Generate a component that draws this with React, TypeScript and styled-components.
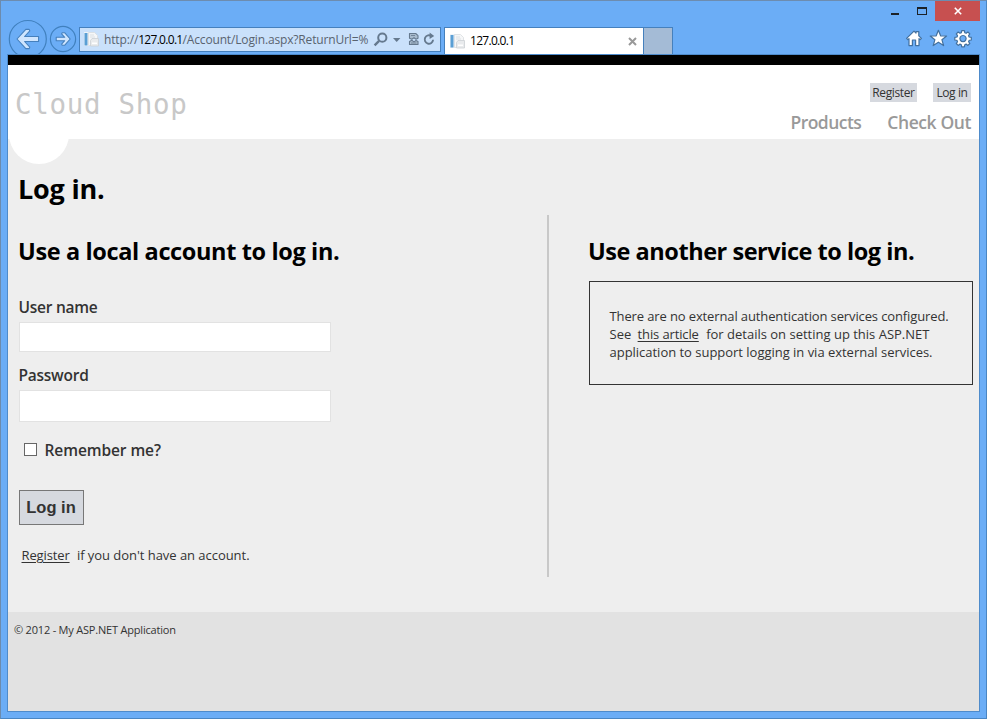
import React from 'react';
import styled, { createGlobalStyle } from 'styled-components';

const GlobalStyle = createGlobalStyle`
  * { box-sizing: border-box; }
  body { margin: 0; overflow: hidden; }
  h1, h2, p { margin: 0; }
  a { color: inherit; }
`;

const Window = styled.div`
  display: flex;
  flex-direction: column;
  width: 987px;
  height: 719px;
  padding: 0 6px 6px;
  background: #6badf6;
  border: 1px solid #4a86c3;
  border-top-color: #6d8caf;
  border-left-color: #6c8bad;
  font-family: 'Open Sans', 'Noto Sans', sans-serif;
  color: #333;
`;

const Chrome = styled.div`
  display: flex;
  flex: none;
  height: 53px;
`;

const Navigation = styled.div`
  display: flex;
  align-items: flex-start;
  height: 53px;
  overflow: hidden;
`;

const NavIcon = styled.svg`
  display: block;
  flex: none;
  width: 72px;
  height: 53px;
`;

const AddressBar = styled.div`
  display: flex;
  align-items: center;
  width: 362px;
  height: 25px;
  margin-top: 26px;
  padding-left: 3px;
  background: #cae1fb;
  border: 1px solid #4580bd;
`;

const Url = styled.div`
  flex: none;
  width: 267px;
  margin-left: 4px;
  overflow: hidden;
  white-space: nowrap;
  font-size: 12px;
  line-height: 20px;
  letter-spacing: -0.15px;
  color: #59636f;
`;

const Host = styled.span<{ $left?: number }>`
  font-family: 'Open Sans', sans-serif;
  letter-spacing: -0.7px;
  margin-left: ${({ $left = 0 }) => $left}px;
  font-size: 12px;
  line-height: 20px;
  color: #000;
`;

const Tab = styled.div`
  display: flex;
  align-items: center;
  width: 200px;
  height: 27px;
  margin: 26px 0 0 3px;
  padding: 0 6px 0 4px;
  background: #fff;
  border: 1px solid #4580bd;
  border-bottom: 0;
`;

const TabClose = styled.svg`
  width: 9px;
  height: 9px;
  margin-left: auto;
`;

const NewTab = styled.div`
  width: 29px;
  height: 27px;
  margin-top: 26px;
  background: #a4bbd6;
  border: 1px solid #4580bd;
  border-width: 1px 1px 0 0;
`;

const WindowTools = styled.div`
  display: flex;
  flex-direction: column;
  align-items: flex-end;
  margin-left: auto;
`;

const Controls = styled.div`
  display: flex;
  height: 20px;
`;

const ControlIcon = styled.svg`
  display: block;
  width: 50px;
  height: 20px;
`;

const CloseButton = styled.div`
  display: flex;
  align-items: center;
  justify-content: center;
  width: 45px;
  height: 20px;
  background: #c75050;
`;

const ToolIcons = styled.svg`
  display: block;
  width: 72px;
  height: 24px;
  margin: 5px 5px 0 0;
`;

const Page = styled.div`
  display: flex;
  flex-direction: column;
  width: 973px;
  height: 658px;
  background: #eee;
  border: 1px solid #4e8bcb;
`;

const Header = styled.header`
  position: relative;
  display: flex;
  justify-content: space-between;
  flex: none;
  height: 84px;
  background: #fff;
  border-top: 10px solid #000;

  &::after {
    content: '';
    position: absolute;
    left: 1px;
    top: 39px;
    width: 60px;
    height: 60px;
    border-radius: 50%;
    background: #fff;
  }
`;

const SiteTitle = styled.p`
  position: relative;
  z-index: 1;
  padding: 22px 0 0 7px;
  font: 27.5px/34px 'DejaVu Sans Mono', monospace;
  letter-spacing: 0.7px;
  color: #c8c8c8;
  white-space: pre;
`;

const HeaderLinks = styled.div`
  display: flex;
  flex-direction: column;
  align-items: flex-end;
  padding: 18px 8px 0 0;
`;

const AccountLinks = styled.nav`
  display: flex;
  gap: 16px;
`;

const AccountLink = styled.a<{ $width: number }>`
  width: ${({ $width }) => $width}px;
  height: 19px;
  background: #d6d9df;
  font-size: 12px;
  line-height: 20px;
  letter-spacing: -0.38px;
  text-align: center;
  white-space: nowrap;
`;

const MainMenu = styled.nav`
  display: flex;
  gap: 26px;
  margin-top: 7px;
`;

const MenuLink = styled.a<{ $spacing: number }>`
  font-size: 17.5px;
  font-weight: 600;
  line-height: 26px;
  letter-spacing: ${({ $spacing }) => $spacing}px;
  color: #999;
  white-space: nowrap;
`;

const Main = styled.main`
  flex: none;
  height: 473px;
  padding: 30px 0 0 11px;
`;

const PageTitle = styled.h1`
  height: 46px;
  margin-left: -1px;
  font-size: 27px;
  line-height: 39px;
  letter-spacing: -0.2px;
  color: #000;
`;

const Columns = styled.div`
  display: flex;
`;

const LocalLogin = styled.section`
  width: 530px;
  height: 362px;
  padding-top: 20px;
  border-right: 2px solid #c8c8c8;
`;

const SocialLogin = styled.section`
  width: 384px;
  margin-left: 40px;
  padding-top: 20px;
`;

const SectionTitle = styled.h2<{ $spacing: number }>`
  margin-left: -1px;
  font-size: 23.5px;
  line-height: 33px;
  height: 32px;
  letter-spacing: ${({ $spacing }) => $spacing}px;
  color: #000;
  white-space: nowrap;
`;

const Form = styled.form`
  display: flex;
  flex-direction: column;
  align-items: flex-start;
  margin-top: 29px;
`;

const Label = styled.label<{ $spacing?: number }>`
  height: 26px;
  margin-left: -0.5px;
  font-size: 15.5px;
  font-weight: 600;
  line-height: 22px;
  letter-spacing: ${({ $spacing = -0.25 }) => $spacing}px;
  white-space: nowrap;
`;

const TextInput = styled.input<{ $height: number; $gap: number }>`
  display: block;
  width: 312px;
  height: ${({ $height }) => $height}px;
  margin: 0 0 ${({ $gap }) => $gap}px;
  padding: 4px;
  background: #fff;
  border: 1px solid #e2e2e2;
  outline: 0;
`;

const RememberRow = styled.div`
  display: flex;
  gap: 8px;
  padding-left: 5px;
`;

const Checkbox = styled.input`
  appearance: none;
  width: 13px;
  height: 13px;
  margin: 4px 0 0;
  background: #fff;
  border: 1px solid #666;
`;

const SubmitButton = styled.button`
  width: 65px;
  height: 35px;
  margin-top: 25px;
  padding: 0 1px 0 0;
  background: #d6d9df;
  border: 1px solid #777;
  font: 700 16.5px/33px 'Liberation Sans', Arial, sans-serif;
  color: #333;
`;

const Hint = styled.p`
  margin: 21px 0 0 2.5px;
  font-size: 13px;
  line-height: 18px;
  letter-spacing: -0.04px;
  white-space: nowrap;
`;

const Link = styled.a<{ $left?: number; $right: number }>`
  margin: 0 ${({ $right }) => $right}px 0 ${({ $left = 0 }) => $left}px;
  letter-spacing: -0.13px;
  text-decoration: underline;
  text-decoration-thickness: 1px;
  text-underline-offset: 2px;
`;

const Notice = styled.div`
  height: 104px;
  margin-top: 14px;
  padding: 25px 0 0 19.5px;
  border: 1px solid #333;
  font-size: 13px;
  line-height: 18px;
`;

const NoticeLine = styled.p<{ $spacing: number }>`
  letter-spacing: ${({ $spacing }) => $spacing}px;
  white-space: nowrap;
`;

const Footer = styled.footer`
  flex: 1;
  padding: 9px 0 0 6px;
  background: #e2e2e2;
  font-size: 11px;
  line-height: 18px;
  letter-spacing: -0.2px;
`;

const FileIcon = styled.svg`
  display: block;
  flex: none;
  width: 17px;
  height: 17px;
`;

const PageIcon = () => (
  <FileIcon viewBox="0 0 17 17">
    <path d="M1 1h5v14H1z" fill="#eef4f9" />
    <path d="M1.5 2h3v12.5h-3z" fill="#5a9fd4" />
    <path d="M5.5 1.5h6l3 3v10h-9z" fill="#f6f7f8" stroke="#d9dde0" strokeWidth=".8" />
    <path d="M7 4h4M7 6h5" stroke="#d6dade" strokeWidth=".8" />
    <path d="M7.5 9.5l1.5-2h6.5v7.5h-8z" fill="#e9ebed" stroke="#ccd0d4" strokeWidth=".8" />
    <path d="M9 11.5h5v1.5H9z" fill="#fff" />
  </FileIcon>
);

const NavButtons = () => (
  <NavIcon viewBox="7 1 72 53">
    <g fill="none" stroke="#4080be" strokeWidth="1.2">
      <circle cx="27.8" cy="39" r="18.5" />
      <circle cx="63" cy="39" r="12.6" />
    </g>
    <g fill="#cfe5fe" stroke="#4580bd" strokeWidth="1.1" strokeLinejoin="round">
      <path d="M17 39l8.8-9.6h3.4l.6 1.5-5.2 5.6h14v5h-14l5.2 5.6-.6 1.5h-3.4z" />
      <path d="M70.2 39l-5.6-6.3h-2.4l-.6 1.2 3.1 3.4H56.2v3.4h8.5l-3.1 3.4.6 1.2h2.4z" />
    </g>
  </NavIcon>
);

const AddressIcons = () => (
  <svg width="66" height="19" viewBox="371 30 66 19">
    <g fill="none" stroke="#65798e">
      <circle cx="382.3" cy="37.7" r="4.1" strokeWidth="2" />
      <path d="M379.1 40.9l-4.5 4.4" strokeWidth="2.4" />
    </g>
    <path d="M393 38h7.4l-3.7 4z" fill="#65798e" />
    <g fill="#a9bccf" stroke="#65798e" strokeWidth="1.1" strokeLinejoin="round">
      <path d="M409.5 38.2v-4.7h6.2l2.3 2.2v2.5l-2 1-2-1.5-2.2 1.5z" />
      <path d="M409.5 44.5v-3l2.3-1.2 2.2 1.6 2-1.4 2 1v3z" />
    </g>
    <path d="M411 35.5h4M411 43h5.5" stroke="#65798e" strokeWidth=".8" />
    <path d="M431.5 36.2a4.2 4.2 0 1 0 1.6 3.6" fill="none" stroke="#65798e" strokeWidth="1.9" />
    <path d="M429.6 32.6l4.6 3.3-4.6 3.2z" fill="#65798e" />
  </svg>
);

const BrowserTools = () => (
  <ToolIcons viewBox="903 26 72 24">
    <g fill="#fff" stroke="#42709f" strokeWidth="1.2" strokeLinejoin="round">
      <path d="M906.6 38.4l7.4-7.3 2 2v-1.4h2.8v4.1l2.6 2.6-1.2 1.2-1.2-1v7h-3.4V40h-3.2v5.6H909v-7l-1.2 1z" />
      <path d="M938.4 30.3l2.2 5.5 6 .2-4.7 3.7 1.7 5.9-5.2-3.4-5.2 3.4 1.7-5.9-4.7-3.7 6-.2z" />
      <path
        fillRule="evenodd"
        d="M961.7 30.6h2.7l.4 2.2 1.3.5 1.8-1.3 1.9 1.9-1.2 1.8.5 1.3 2.2.4v2.6l-2.2.4-.5 1.3 1.2 1.8-1.9 1.9-1.8-1.3-1.3.6-.4 2.2h-2.7l-.4-2.2-1.3-.6-1.8 1.3-1.9-1.9 1.2-1.8-.5-1.3-2.2-.4v-2.6l2.2-.4.5-1.3-1.2-1.8 1.9-1.9 1.8 1.3 1.3-.5z M963 35.5a3.1 3.1 0 1 0 .01 0z"
      />
    </g>
  </ToolIcons>
);

export default function App() {
  return (
    <Window>
      <GlobalStyle />
      <Chrome>
        <Navigation>
          <NavButtons />
          <AddressBar>
            <PageIcon />
            <Url>
              http://<Host>127.0.0.1</Host>/Account/Login.aspx?ReturnUrl=%
            </Url>
            <AddressIcons />
          </AddressBar>
          <Tab>
            <PageIcon />
            <Host $left={4}>127.0.0.1</Host>
            <TabClose viewBox="0 0 9 9">
              <path d="M1 1l7 7M8 1L1 8" stroke="#999" strokeWidth="2" />
            </TabClose>
          </Tab>
          <NewTab />
        </Navigation>
        <WindowTools>
          <Controls>
            <ControlIcon viewBox="885 1 50 20">
              <path d="M891 13h8v2h-8z" fill="#1c2228" />
              <path d="M917 7h10v8h-10zM918 9v5h8V9z" fill="#1c2228" fillRule="evenodd" />
            </ControlIcon>
            <CloseButton>
              <svg width="8" height="8" viewBox="0 0 8 8">
                <path d="M.8.8l6.4 6.4M7.2.8L.8 7.2" stroke="#fff" strokeWidth="1.6" />
              </svg>
            </CloseButton>
          </Controls>
          <BrowserTools />
        </WindowTools>
      </Chrome>
      <Page>
        <Header>
          <SiteTitle>Cloud Shop</SiteTitle>
          <HeaderLinks>
            <AccountLinks>
              <AccountLink $width={47}>Register</AccountLink>
              <AccountLink $width={38}>Log in</AccountLink>
            </AccountLinks>
            <MainMenu>
              <MenuLink $spacing={-0.55}>Products</MenuLink>
              <MenuLink $spacing={-0.4}>Check Out</MenuLink>
            </MainMenu>
          </HeaderLinks>
        </Header>
        <Main>
          <PageTitle>Log in.</PageTitle>
          <Columns>
            <LocalLogin>
              <SectionTitle $spacing={-0.37}>Use a local account to log in.</SectionTitle>
              <Form>
                <Label htmlFor="user">User name</Label>
                <TextInput id="user" $height={30} $gap={12} />
                <Label htmlFor="password">Password</Label>
                <TextInput id="password" type="password" $height={32} $gap={17} />
                <RememberRow>
                  <Checkbox id="remember" type="checkbox" />
                  <Label htmlFor="remember" $spacing={-0.08}>Remember me?</Label>
                </RememberRow>
                <SubmitButton type="button">Log in</SubmitButton>
              </Form>
              <Hint>
                <Link $right={4}>Register</Link> if you don't have an account.
              </Hint>
            </LocalLogin>
            <SocialLogin>
              <SectionTitle $spacing={-0.46}>Use another service to log in.</SectionTitle>
              <Notice>
                <NoticeLine $spacing={-0.12}>
                  There are no external authentication services configured.
                </NoticeLine>
                <NoticeLine $spacing={0}>
                  See <Link $left={3} $right={4}>this article</Link> for details on setting up this ASP.NET
                </NoticeLine>
                <NoticeLine $spacing={-0.02}>
                  application to support logging in via external services.
                </NoticeLine>
              </Notice>
            </SocialLogin>
          </Columns>
        </Main>
        <Footer>© 2012 - My ASP.NET Application</Footer>
      </Page>
    </Window>
  );
}
